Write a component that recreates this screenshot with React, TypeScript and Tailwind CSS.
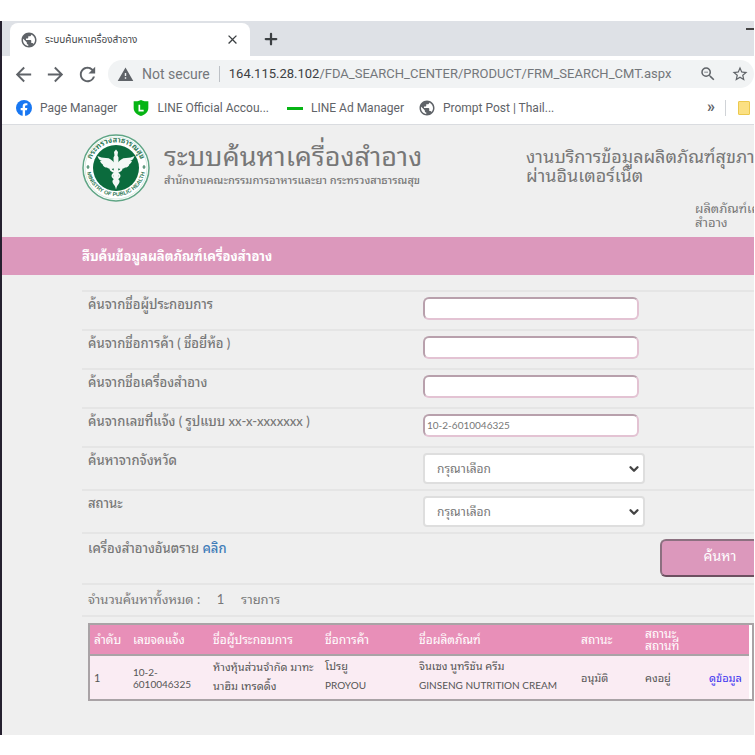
import React from 'react';
import { Plus, ChevronDown } from 'lucide-react';
import { MdArrowBack, MdArrowForward, MdRefresh, MdClose, MdPublic, MdStarBorder, MdWarning, MdZoomOut } from 'react-icons/md';

const textFields = [
  { id: 'operator', label: 'ค้นจากชื่อผู้ประกอบการ', value: '' },
  { id: 'brand', label: 'ค้นจากชื่อการค้า ( ชื่อยี่ห้อ )', value: '' },
  { id: 'cosmetic', label: 'ค้นจากชื่อเครื่องสำอาง', value: '' },
  { id: 'notice', label: 'ค้นจากเลขที่แจ้ง ( รูปแบบ xx-x-xxxxxxx )', value: '10-2-6010046325' },
];

const selectFields = [
  { id: 'province', label: 'ค้นหาจากจังหวัด' },
  { id: 'status', label: 'สถานะ' },
];

const columns = ['ลำดับ', 'เลขจดแจ้ง', 'ชื่อผู้ประกอบการ', 'ชื่อการค้า', 'ชื่อผลิตภัณฑ์', 'สถานะ', 'สถานะ สถานที่', ''];

const Emblem: React.FC = () => (
  <svg className="w-full h-full" viewBox="0 0 136 136">
    <defs>
      <path id="upper" d="M19 86A52 52 0 1 1 117 86" />
      <path id="lower" d="M10 76A59 59 0 0 0 126 76" />
    </defs>
    <circle cx="68" cy="68" r="66" fill="#fff" stroke="#5fa585" strokeWidth="3" />
    <circle cx="68" cy="68" r="62" fill="none" stroke="#b5d6c6" strokeWidth="1" />
    <circle cx="68" cy="68" r="46" fill="#0b6b3d" />
    <text fontSize="15" fontWeight="700" fill="#2f7a57" textAnchor="middle">
      <textPath href="#upper" startOffset="50%">กระทรวงสาธารณสุข</textPath>
    </text>
    <text fontSize="11" fontWeight="700" fill="#2f7a57" textAnchor="middle" fontFamily="Liberation Sans">
      <textPath href="#lower" startOffset="50%">MINISTRY OF PUBLIC HEALTH</textPath>
    </text>
    <g fill="#f3f8f5">
      <path d="M68 31l4 5-1 7 2 4-1 50-4 14-4-14-1-50 2-4-1-7z" />
      <path d="M65 58C60 52 56 48 48 48c-7 0-12-2-17-4 2 7 6 9 9 10h-4c2 6 6 7 9 7h-4c2 5 6 6 9 6 5 4 11 3 15 1z" />
      <path d="M71 58c5-6 9-10 17-10 7 0 12-2 17-4-2 7-6 9-9 10h4c-2 6-6 7-9 7h4c-2 5-6 6-9 6-5 4-11 3-15 1z" />
    </g>
    <path d="M58 66c-6 10 18 10 17 18s-14 5-12 12 5 4 5 9M78 66c6 10-18 10-17 18s14 5 12 12-5 4-5 9" fill="none" stroke="#f3f8f5" strokeWidth="4" />
    <path d="M12 62v8M9 66h6M124 62v8M121 66h6" stroke="#2f7a57" strokeWidth="2" />
  </svg>
);

const Browser: React.FC = () => (
  <div className="bg-white font-['Roboto','Noto_Sans_Thai','Noto_Sans',sans-serif] text-[#5f6368]">
    <div className="flex h-[35px] items-end bg-[#dee1e6] pl-2">
      <div className="flex h-[33px] w-60 items-center rounded-t-lg bg-white pl-[10px] pr-[10px]">
        <MdPublic size={18} />
        <span className="ml-[7px] text-[10px] text-[#45484c]">ระบบค้นหาเครื่องสำอาง</span>
        <button aria-label="Close tab" className="ml-auto text-[#3c4043]"><MdClose size={15} /></button>
      </div>
      <button aria-label="New tab" className="mb-2 ml-3 text-[#3c4043]"><Plus size={18} strokeWidth={3} /></button>
      <button aria-label="Minimize" className="mb-[26px] ml-auto h-[2px] w-2 bg-[#444]" />
    </div>

    <div className="flex h-9 items-center gap-[9px] pl-[10px]">
      <button aria-label="Back"><MdArrowBack size={23} /></button>
      <button aria-label="Forward"><MdArrowForward size={23} /></button>
      <button aria-label="Reload"><MdRefresh size={23} /></button>
      <div className="flex h-7 flex-1 items-center rounded-full bg-[#f1f3f4] pl-[9px] pr-[5px] text-[13px] whitespace-nowrap">
        <MdWarning size={17} className="shrink-0" />
        <span className="ml-2 text-sm text-[#74777b]">Not secure</span>
        <span className="mx-[9px] h-4 w-px bg-[#bdc1c6]" />
        <span className="text-[#74777b]"><span className="text-[#3c4043]">164.115.28.102</span>/FDA_SEARCH_CENTER/PRODUCT/FRM_SEARCH_CMT.aspx</span>
        <button aria-label="Zoom" className="ml-auto"><MdZoomOut size={18} /></button>
        <button aria-label="Bookmark this page" className="ml-[14px]"><MdStarBorder size={18} /></button>
      </div>
    </div>

    <div className="flex h-[33px] items-center border-b border-[#dadce0] pl-[14px] text-xs whitespace-nowrap">
      <a href="#page-manager" className="flex items-center gap-2">
        <svg width="16" height="16" viewBox="0 0 24 24">
          <circle cx="12" cy="12" r="12" fill="#1877f2" />
          <path d="M10 24v-8.500H7V12h3V9.400C10 6.400 11.800 4.800 14.500 4.800c1.300 0 2.600.2 2.600.2v3h-1.500c-1.500 0-2 .9-2 1.900V12h3.400l-.6 3.500h-2.800V24z" fill="#fff" />
        </svg>
        Page Manager
      </a>
      <a href="#line-official" className="ml-4 flex items-center gap-2">
        <svg width="16" height="16" viewBox="0 0 24 24">
          <path d="M12 0c4 2 7 2 11 2v10c0 6-5 10-11 12C6 22 1 18 1 12V2c4 0 7 0 11-2z" fill="#06b414" />
          <path d="M9.500 7v9H16" fill="none" stroke="#fff" strokeWidth="2.500" />
        </svg>
        LINE Official Accou...
      </a>
      <a href="#line-ad" className="ml-[18px] flex items-center gap-2">
        <span className="h-[3px] w-4 bg-[#06b414]" />
        LINE Ad Manager
      </a>
      <a href="#prompt-post" className="ml-[14px] flex items-center gap-[7px]"><MdPublic size={18} />Prompt Post | Thail...</a>
      <button aria-label="More bookmarks" className="ml-auto pb-[2px] text-base font-bold">»</button>
      <span className="ml-[10px] h-4 w-px bg-[#d0d3d7]" />
      <span className="ml-3 mr-1 h-[14px] w-3 shrink-0 rounded-[1px] border border-[#ecc94e] bg-[#fbe083]" />
    </div>
  </div>
);

const SiteHeader: React.FC = () => (
  <header className="flex h-28 pl-20 pt-[9px]">
    <div className="h-[68px] w-[68px] shrink-0"><Emblem /></div>
    <div className="ml-[14px] w-[362px] shrink-0 pt-1 whitespace-nowrap">
      <h1 className="text-[27px] leading-9">ระบบค้นหาเครื่องสำอาง</h1>
      <p className="text-[11px] font-medium leading-3">สำนักงานคณะกรรมการอาหารและยา กระทรวงสาธารณสุข</p>
    </div>
    <div className="pt-[13px] text-lg leading-[19px] whitespace-nowrap">
      <p>งานบริการข้อมูลผลิตภัณฑ์สุขภาพ<br />ผ่านอินเตอร์เน็ต</p>
      <p className="ml-[169px] mt-4 text-[13px] leading-[14px]">ผลิตภัณฑ์เครื่อง<br />สำอาง</p>
    </div>
  </header>
);

const rowClass = 'grid grid-cols-[335px_237px_1fr] border-t-2 border-[#e5e5e5] pl-[6px]';

const SearchForm: React.FC = () => (
  <form className="ml-20 mt-[15px] text-[13px]">
    {textFields.map((f) => (
      <div key={f.id} className={`${rowClass} h-[39px]`}>
        <label htmlFor={f.id} className="font-medium leading-6">{f.label}</label>
        <input id={f.id} defaultValue={f.value} className="mt-[5px] h-[23px] w-[216px] rounded-md border-2 border-t-[#b8a0ac] border-l-[#b8a0ac] border-r-[#e3c3d3] border-b-[#e3c3d3] bg-white px-[2px] pb-[2px] text-[10px]" />
      </div>
    ))}
    {selectFields.map((f) => (
      <div key={f.id} className={`${rowClass} h-[43px]`}>
        <label htmlFor={f.id} className="font-medium leading-6">{f.label}</label>
        <div className="relative mt-[5px] h-[31px] w-[222px]">
          <select id={f.id} className="h-full w-full appearance-none rounded border-2 border-[#dedede] bg-white px-3 text-xs">
            <option>กรุณาเลือก</option>
          </select>
          <ChevronDown size={14} strokeWidth={4} className="pointer-events-none absolute right-1 top-[9px] text-[#444]" />
        </div>
      </div>
    ))}
    <div className={`${rowClass} h-[51px]`}>
      <p className="pt-[2px] font-medium leading-6">เครื่องสำอางอันตราย <a href="#list" className="text-[#3f7cb8]">คลิก</a></p>
      <span />
      <button type="button" className="mt-[5px] h-[38px] w-[120px] rounded-md border-2 border-t-[#8c7080] border-l-[#8c7080] border-r-[#5c4450] border-b-[#6c5060] bg-[#dc98bc] pb-1 text-sm text-white">ค้นหา</button>
    </div>
    <p className="h-[34px] border-t-2 border-b-2 border-[#e5e5e5] pl-[6px] leading-7 whitespace-pre">จำนวนค้นหาทั้งหมด :     1     รายการ</p>
  </form>
);

const ResultTable: React.FC = () => (
  <div className="ml-[86px] mt-[6px] border-2 border-[#a9a3a6] bg-white pr-[3px]">
    <table className="w-full table-fixed bg-[#faecf3] text-left text-[11px] leading-3 text-[#555]">
      <colgroup>
        <col className="w-[39px]" /><col className="w-20" /><col className="w-28" /><col className="w-[94px]" /><col className="w-[162px]" /><col className="w-16" /><col className="w-16" /><col />
      </colgroup>
      <thead className="border-b-2 border-[#a9a3a6] bg-[#e88fb8] text-xs leading-3 text-white">
        <tr className="h-[30px]">
          {columns.map((h, idx) => (
            <th key={idx} className="pl-1 font-normal">{h}</th>
          ))}
        </tr>
      </thead>
      <tbody>
        <tr className="h-[43px]">
          <td className="pl-1">1</td>
          <td className="pl-1 text-[10px]">10-2-<br />6010046325</td>
          <td className="pb-1 pl-1 leading-[19px] whitespace-nowrap">ห้างหุ้นส่วนจำกัด มาทะ<br />นาฮิม เทรดดิ้ง</td>
          <td className="pb-1 pl-1 leading-[19px]">โปรยู<br /><span className="text-[10px]">PROYOU</span></td>
          <td className="pb-1 pl-1 leading-[19px] whitespace-nowrap">จินเซง นูทริชัน ครีม<br /><span className="text-[10px]">GINSENG NUTRITION CREAM</span></td>
          <td className="pl-1">อนุมัติ</td>
          <td className="pl-1">คงอยู่</td>
          <td className="pl-1"><a href="#detail" className="text-[#3a32f0]">ดูข้อมูล</a></td>
        </tr>
      </tbody>
    </table>
  </div>
);

const App: React.FC = () => {
  return (
    <div className="min-h-screen overflow-hidden bg-white py-[21px] pr-px">
      <div className="border-l-2 border-[#25202f]">
        <Browser />
        <main className="overflow-hidden bg-[#efefef] pb-[34px] font-['Lato','Noto_Sans_Thai_Looped','Noto_Sans_Thai','Noto_Sans',sans-serif] text-[#777]">
          <SiteHeader />
          <h2 className="bg-[#dc98bc] pl-20 text-[13px] font-bold leading-[38px] text-white">สืบค้นข้อมูลผลิตภัณฑ์เครื่องสำอาง</h2>
          <SearchForm />
          <ResultTable />
        </main>
      </div>
    </div>
  );
};

export default App;
